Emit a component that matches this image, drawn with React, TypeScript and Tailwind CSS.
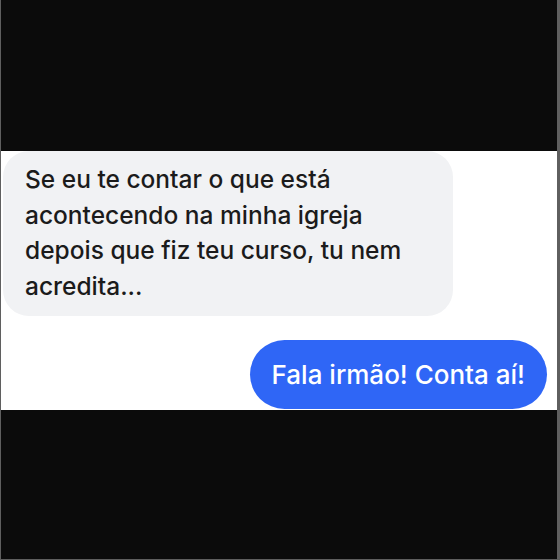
const font = { fontFamily: "Inter, 'Noto Sans', sans-serif" };

export default function App() {
  return (
    <div
      className="w-[560px] h-[560px] flex flex-col bg-[#0b0b0b] border-l border-b border-r-[3px] border-[#5f5f5f]"
      style={font}
    >
      <div className="h-[151px] shrink-0" />
      <section className="h-[259px] shrink-0 bg-white pl-[2px] pr-[10px] flex flex-col">
        <div className="w-[450px] h-[165px] bg-[#f1f2f4] rounded-[26px] pl-[22px] pt-[11px]">
          <p className="text-[24.5px] font-medium leading-[35.5px] text-[#1b1b1b]">
            Se eu te contar o que está
            <br />
            acontecendo na minha igreja
            <br />
            depois que fiz teu curso, tu nem
            <br />
            acredita...
          </p>
        </div>
        <div className="flex justify-end mt-[24px]">
          <div className="h-[69px] px-[22px] rounded-full bg-[#2f66f6] flex items-center">
            <span className="text-[26px] font-medium text-white">Fala irmão! Conta aí!</span>
          </div>
        </div>
      </section>
      <div className="flex-1" />
    </div>
  );
}
